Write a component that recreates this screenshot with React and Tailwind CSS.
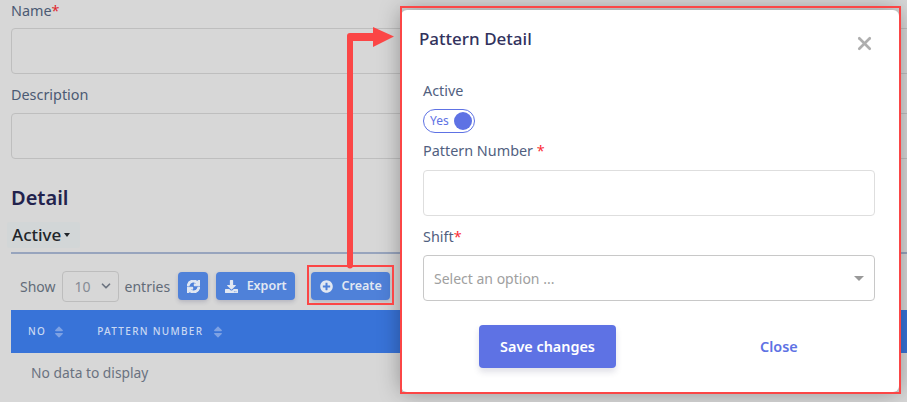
import { FaDownload, FaPlusCircle, FaSort, FaSync } from 'react-icons/fa'
import { ChevronDown, X } from 'lucide-react'

const font = { fontFamily: '"Noto Sans", "Open Sans", sans-serif' }

function Arrow() {
  return (
    <svg className="absolute left-[340px] top-[20px]" width="60" height="255" viewBox="0 0 60 255" fill="#fb4646">
      <path d="M7 245 L7 16 Q7 13 10 13 L33 13 L33 7 L54 16.5 L33 27 L33 21 L13 21 L13 245 Q13 248.5 10 248.5 Q7 248.5 7 245 Z" />
    </svg>
  )
}

function PatternModal() {
  return (
    <div className="absolute left-[401px] top-[10px] w-[498px] h-[382px] bg-white rounded-[6px] shadow-[0_0_22px_rgba(0,0,0,0.35)] pl-[22px] pr-[24px]">
      <div className="relative pt-[17px] -ml-1">
        <h5 className="text-[17px] leading-[24px] font-medium text-[#32325d]">Pattern Detail</h5>
        <X className="absolute right-[0px] top-[23px] text-[#aeaeae]" size={21} strokeWidth={3} />
      </div>
      <div className="mt-[30px] text-[14.4px] leading-[20px] text-[#525f7f]">Active</div>
      <div className="mt-[8px] w-[52px] h-[24px] rounded-full border-[1.5px] border-[#5e72e4] flex items-center justify-between pl-[6px] pr-[2px]">
        <span className="text-[12px] text-[#5e72e4]">Yes</span>
        <span className="w-[18px] h-[18px] rounded-full bg-[#5e72e4]"></span>
      </div>
      <div className="mt-[8px] text-[14.4px] leading-[20px] text-[#525f7f]">
        Pattern Number <span className="text-[#fb2c36]">*</span>
      </div>
      <div className="mt-[9px] h-[46px] rounded-[4px] border border-[#dedede]"></div>
      <div className="mt-[11px] text-[14.4px] leading-[20px] text-[#525f7f]">
        Shift<span className="text-[#fb2c36]">*</span>
      </div>
      <div className="mt-[8px] h-[46px] rounded-[4px] border border-[#c8c8c8] flex items-center justify-between pl-[10px] pr-[10px]">
        <span className="text-[14px] text-[#a0a0a0]">Select an option ...</span>
        <span className="w-0 h-0 border-x-[5px] border-x-transparent border-t-[5px] border-t-[#999999]"></span>
      </div>
      <div className="mt-[24px] flex">
        <button className="ml-[56px] w-[137px] h-[43px] rounded-[4px] bg-[#5e72e4] text-white text-[14.4px] font-semibold shadow-[0_4px_6px_rgba(50,50,93,0.15)]">
          Save changes
        </button>
        <button className="ml-[144px] h-[43px] text-[14.4px] font-semibold text-[#5e72e4]">Close</button>
      </div>
    </div>
  )
}

export default function App() {
  return (
    <div className="relative w-[907px] h-[402px] overflow-hidden bg-[#d7d7d7]" style={font}>
      <div className="w-[1100px] pl-[11px]">
        <div className="pt-[1px] text-[14.4px] leading-[20px] text-[#4b5a73]">
          Name<span className="text-[#e0262e]">*</span>
        </div>
        <div className="mt-[7px] h-[46px] rounded-[4px] border border-[#bebebe]"></div>
        <div className="mt-[11px] text-[14.4px] leading-[20px] text-[#4b5a73]">Description</div>
        <div className="mt-[8px] h-[46px] rounded-[4px] border border-[#bebebe]"></div>
        <h3 className="mt-[25px] text-[20px] leading-[28px] font-semibold text-[#22224d]">Detail</h3>
        <div className="mt-[10px] -ml-1 w-[73px] h-[26px] pl-[5px] flex items-center gap-[3px] rounded-[3px] bg-[#d2d6d7] text-[#212529] text-[17px] font-medium">
          Active
          <span className="w-0 h-0 border-x-[3.5px] border-x-transparent border-t-[4px] border-t-[#212529]"></span>
        </div>
        <div className="mt-[4px] h-[2px] bg-[#97a4bd]"></div>
        <div className="mt-[16px] pl-[9px] flex items-center h-[32px] text-[14px] text-[#626b78]">
          <span>Show</span>
          <div className="ml-[6px] w-[57px] h-[31px] rounded-[4px] border border-[#bdbdbd] flex items-center justify-between pl-[12px] pr-[5px] text-[#858b94]">
            10
            <ChevronDown size={14} strokeWidth={3} className="text-[#6c7480]" />
          </div>
          <span className="ml-[6px]">entries</span>
          <button className="ml-[8px] w-[30px] h-[28px] rounded-[4px] bg-[#4f81d9] text-[#e2e8f2] flex items-center justify-center shadow-[0_2px_4px_rgba(50,50,93,0.2)]">
            <FaSync size={13} stroke="currentColor" strokeWidth={40} />
          </button>
          <button className="ml-[8px] w-[79px] h-[28px] rounded-[4px] bg-[#4f81d9] text-[#e2e8f2] text-[12.5px] font-semibold flex items-center justify-center gap-[9px] shadow-[0_2px_4px_rgba(50,50,93,0.2)]">
            <FaDownload size={13} />
            Export
          </button>
          <button className="ml-[16px] w-[79px] h-[28px] rounded-[4px] bg-[#4f81d9] text-[#e2e8f2] text-[12.5px] font-semibold flex items-center justify-center gap-[9px] shadow-[0_2px_4px_rgba(50,50,93,0.2)]">
            <FaPlusCircle size={13} />
            Create
          </button>
        </div>
        <div className="mt-[8px] h-[43px] bg-[#3873d8] flex items-center text-[10px] tracking-[1.3px] text-[#c9d8f2] font-medium">
          <span className="ml-[17px]">NO</span>
          <FaSort size={14} className="ml-[6px] text-[#7ea2e4]" />
          <span className="ml-[31px]">PATTERN NUMBER</span>
          <FaSort size={14} className="ml-[8px] text-[#7ea2e4]" />
        </div>
        <div className="mt-[10px] ml-[20px] text-[13.8px] leading-[20px] text-[#6a7280]">No data to display</div>
      </div>

      <PatternModal />

      {/* annotations drawn over the screenshot */}
      <Arrow />
      <div className="absolute left-[307px] top-[265px] w-[87px] h-[40px] border-2 border-[#fb4646]"></div>
      <div className="absolute left-[400px] top-[6px] w-[501px] h-[388px] border-2 border-[#fb4646]"></div>
    </div>
  )
}
